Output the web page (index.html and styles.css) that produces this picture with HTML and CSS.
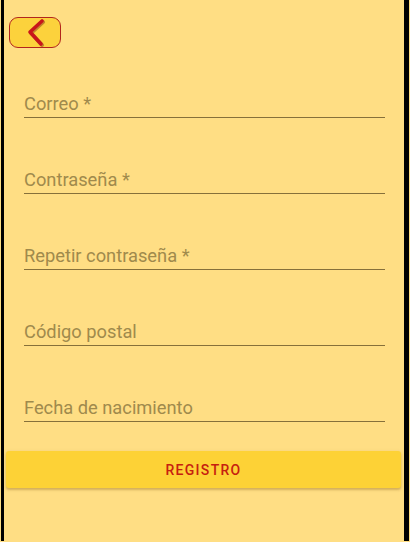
FILE: index.html
```html
<!DOCTYPE html>
<html lang="es">
<head>
<meta charset="utf-8">
<title>Registro</title>
<link rel="stylesheet" href="styles.css">
</head>
<body>
<div class="screen">
  <button class="back" aria-label="Volver">
    <svg width="20" height="29" viewBox="0 0 20 29">
      <path d="M15 3 L3 14 L14 26" fill="none" stroke="#6e120e" stroke-width="4" stroke-linecap="round" stroke-linejoin="round" transform="translate(1 1)" opacity="0.4"/>
      <path d="M15 3 L3 14 L14 26" fill="none" stroke="#c8161b" stroke-width="3.6" stroke-linecap="round" stroke-linejoin="round"/>
    </svg>
  </button>
  <form class="form">
    <div class="field"><span class="label">Correo *</span></div>
    <div class="field"><span class="label">Contraseña *</span></div>
    <div class="field"><span class="label">Repetir contraseña *</span></div>
    <div class="field"><span class="label">Código postal</span></div>
    <div class="field"><span class="label">Fecha de nacimiento</span></div>
  </form>
  <button class="submit">REGISTRO</button>
</div>
</body>
</html>
```

FILE: styles.css
```css
html, body {
  margin: 0;
  padding: 0;
  background: #FFDE84;
}
body {
  font-family: Roboto, "Liberation Sans", sans-serif;
  width: 410px;
  height: 542px;
  overflow: hidden;
}
.screen {
  box-sizing: border-box;
  margin-left: 1px;
  width: 408px;
  height: 541px;
  border-left: 3px solid #000;
  border-right: 5px solid #000;
  background: #FFDE84;
  display: flex;
  flex-direction: column;
}
.back {
  margin: 17px 0 0 5px;
  width: 52px;
  height: 31px;
  box-sizing: border-box;
  border: 1px solid #b3251c;
  border-radius: 9px;
  background: #FCD23C;
  padding: 0 0 0 17px;
  display: flex;
  align-items: center;
  cursor: pointer;
}
.back svg {
  display: block;
}
.form {
  margin: 46px 19px 0 20px;
  display: flex;
  flex-direction: column;
  gap: 52px;
}
.field {
  border-bottom: 1px solid #86703a;
  padding-bottom: 3px;
  height: 20px;
}
.label {
  display: block;
  font-size: 18.3px;
  line-height: 20px;
  color: #a08a4c;
}
.submit {
  margin: 29px 3px 0 2px;
  height: 37px;
  border: none;
  border-radius: 3px;
  background: #FDD236;
  color: #c6200f;
  font-family: Roboto, "Liberation Sans", sans-serif;
  font-weight: 500;
  font-size: 14px;
  letter-spacing: 1.3px;
  box-shadow: 0 2px 2px rgba(120, 80, 0, 0.25), 0 1px 4px rgba(120, 80, 0, 0.12);
  cursor: pointer;
}
```
